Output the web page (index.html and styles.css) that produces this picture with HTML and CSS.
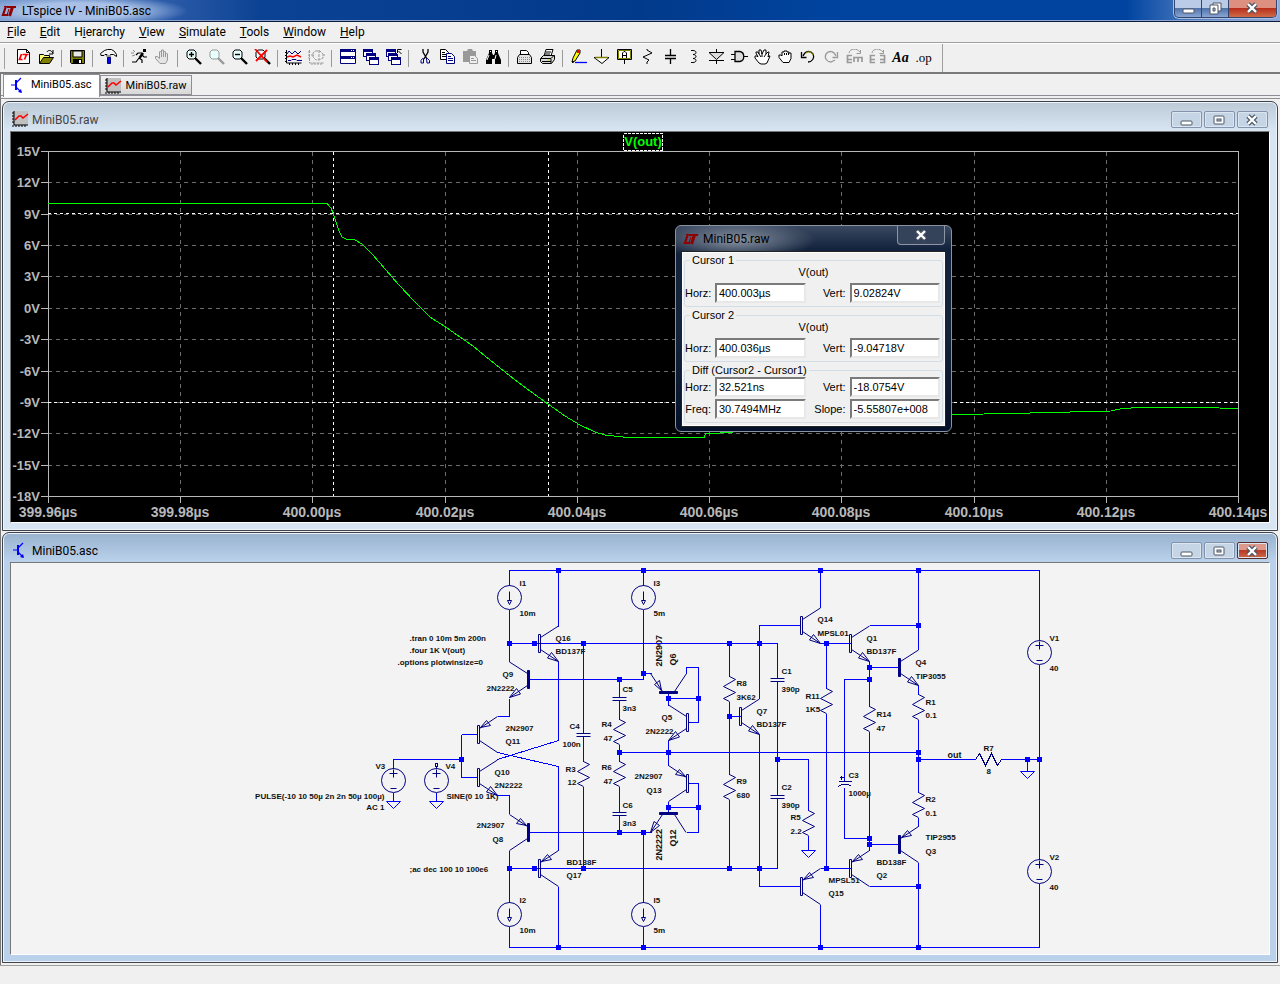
FILE: index.html
```html
<!DOCTYPE html>
<html lang="en">
<head>
<meta charset="utf-8">
<title>LTspice IV - MiniB05.asc</title>
<link rel="stylesheet" href="styles.css">
</head>
<body>
<svg class="defs" aria-hidden="true">
  <defs>
    <g id="lt" fill="none" stroke="#900000"><path d="M6 2L3 11H8" stroke-width="2.200"/><path d="M7 3H16" stroke-width="2"/><path d="M12.500 3L9.500 12" stroke-width="3"/><path d="M4 2.500H8M7 11l2-6" stroke-width="1"/></g>
    <g id="i-raw"><rect x="1" width="15" height="14" fill="#c0c0c0"/><path d="M2 0v14h14M0 2h2M0 5h2M0 8h2M0 11h2M4 14v2M7 14v2M10 14v2M13 14v2M0 15h2" stroke="#000" fill="none"/><path d="M3 9l4-4h2l2 2 5-4" stroke="#f00" stroke-width="1.6" fill="none"/></g>
    <g id="i-asc"><path d="M0 7h5M10 0L5 5M5 9l5 5" stroke="#00f" stroke-width="1.200" fill="none"/><path d="M5 2v10" stroke="#00f" stroke-width="2"/><path d="M11 15l-4-1 3-3z" fill="#00f"/></g>
    <g id="w-min"><rect x="1" y="7" width="11" height="4" rx="1" fill="#fff" stroke="#4d5666"/></g>
    <g id="w-max"><rect x="1" y="2" width="10" height="8" rx="1" fill="#fff" stroke="#4d5666"/><rect x="4" y="5" width="4" height="2" fill="#b5c6dc" stroke="#4d5666"/></g>
    <g id="w-close"><path d="M2 2l8 8M10 2l-8 8" stroke="#4d5666" stroke-width="4.6"/><path d="M2 2l8 8M10 2l-8 8" stroke="#fff" stroke-width="2.4"/></g>
    <g id="lens"><path class="glass" d="M3 1h5l2 2v5l-2 2H3L1 8V3z" stroke="currentColor"/><path d="M9 9l6 6" stroke="currentColor" stroke-width="2.4"/></g>
    <g id="win"><rect x="0" y="0" width="9" height="7" fill="#fff" stroke="#000080"/><path d="M0 1h9" stroke="#000080" stroke-width="3"/></g>
    <g id="npn"><path class="bar" d="M-1-9h2V9h-2z"/><path d="M1-6l18-11.500M1 6l18 12"/><path class="hollow" d="M19 18L8 14.500 12 9z"/></g>
    <g id="pnp"><path class="bar" d="M-1-9h2V9h-2z"/><path d="M1 6l18 12M1-6l18-12"/><path class="hollow" d="M2-7L8-14 12-9z"/></g>
    <g id="res"><path d="M0 0l6 3-12 7 12 6-12 6 6 3"/></g>
    <g id="cap"><path d="M-7 0H7M-7 3H7"/></g>
    <g id="gnd"><path d="M-7 0H7L0 7z"/></g>
    <g id="isrc"><circle r="12"/><path d="M0-6V3M-2 3H2L0 7z"/></g>
    <g id="vsrc"><circle r="12"/><path d="M-4-7H4M0-11V-3M-3 8H3"/></g>
    <path id="dot" d="M-3-3H2V2H-3z"/>
  </defs>
</svg>

<header class="titlebar">
  <svg class="logo" viewBox="0 0 16 14"><use href="#lt"/></svg>
  <h1>LTspice IV - MiniB05.asc</h1>
  <div class="sysbuttons">
    <button aria-label="Minimize"><svg viewBox="0 0 13 13"><use href="#w-min"/></svg></button>
    <button aria-label="Restore"><svg viewBox="0 0 13 13"><path d="M4 1h8v8H4z" fill="#fff" stroke="#4d5666"/><path d="M1 3h8v9H1z" fill="#fff" stroke="#4d5666"/><path d="M4 6h2v3H4z" fill="#b5c6dc" stroke="#4d5666"/></svg></button>
    <button class="close" aria-label="Close"><svg viewBox="0 0 13 13"><use href="#w-close"/></svg></button>
  </div>
</header>

<nav class="menu">
  <button><u>F</u>ile</button><button><u>E</u>dit</button><button>H<u>i</u>erarchy</button><button><u>V</u>iew</button><button><u>S</u>imulate</button><button><u>T</u>ools</button><button><u>W</u>indow</button><button><u>H</u>elp</button>
</nav>

<div class="toolbar" role="toolbar">
  <button aria-label="New schematic"><svg viewBox="0 0 17 16"><path d="M2.500.500h9l3 3v11h-12z" fill="#fff" stroke="#000"/><path d="M11.500.500v3h3" fill="none" stroke="#000"/><path d="M6.500 5L4.500 10.500h3M7.500 5.500h6M11.500 5.500l-2 5" fill="none" stroke="#f00" stroke-width="1.700"/></svg></button>
  <button aria-label="Open"><svg viewBox="0 0 17 16"><path d="M1.500 14V5.500h4l1 1h5V9" fill="#ffff70" stroke="#000"/><path d="M1.500 14.500l4-6h10l-4 6z" fill="#808000" stroke="#000"/><path d="M9 3c1-2 4-2 5 0l1 1M15 1v4h-4" fill="none" stroke="#000"/></svg></button>
  <i></i>
  <button aria-label="Save"><svg viewBox="0 0 17 16"><path d="M1.500 1.500h14v13h-13l-1-1z" fill="#808000" stroke="#000"/><path d="M4 2h9v6H4z" fill="#e8e8e8" stroke="#000"/><path d="M4 10h9v5H4z" fill="#000"/><path d="M10 11h2v3h-2z" fill="#fff"/></svg></button>
  <i></i>
  <button aria-label="Control panel"><svg viewBox="0 0 17 16"><path d="M.500 4.500l4-3 3-1h4l3 2 2 3v2l-3-2h-3v2H7V5.500H5l-1 1H1z" fill="#f4f4f4" stroke="#000"/><path d="M7 6h4v3H7z" fill="#999"/><path d="M7.500 8.500h3v6h-3z" fill="#00f" stroke="#000080"/></svg></button>
  <i></i>
  <button aria-label="Run"><svg viewBox="0 0 17 16"><path d="M12 0h3v3h-3z" fill="#000"/><path d="M12 4L8.500 9" stroke="#000" stroke-width="2.400"/><path d="M8 9l3 2v3M8 9l-3 4H1M11 4H7L5 6M11 6l2 2h3" fill="none" stroke="#000" stroke-width="1.200"/><path d="M2 1l2 2M0 4h3M1 7l3-1" stroke="#888"/></svg></button>
  <button aria-label="Halt" disabled><svg viewBox="0 0 17 16"><path d="M6 14.500L1.500 9.500V7.500h2l2 2V3l1-1 1 1V1h2v2l1-1 1 1v2l1-1 1 1v6l-2 3.500z" fill="#e4e4e4" stroke="#999"/><path d="M7.500 3v5M9.500 3v5M11.500 4v4" stroke="#999"/></svg></button>
  <i></i>
  <button aria-label="Zoom in"><svg viewBox="0 0 17 16"><use href="#lens" x="1"/><path d="M4 5.500h5M6.500 3v5" stroke="#000" stroke-width="1.400"/></svg></button>
  <button aria-label="Pan" disabled><svg class="grey" viewBox="0 0 17 16"><use href="#lens" x="1"/></svg></button>
  <button aria-label="Zoom out"><svg viewBox="0 0 17 16"><use href="#lens" x="1"/><path d="M4 5.500h5" stroke="#000" stroke-width="1.400"/></svg></button>
  <button aria-label="Zoom full extents"><svg viewBox="0 0 17 16"><use href="#lens" x="1"/><path d="M1 0l12 13M13 1L2 12" stroke="#f00" stroke-width="1.800"/></svg></button>
  <i></i>
  <button aria-label="Autorange"><svg viewBox="0 0 17 16"><path d="M1.500 1v13h15M0 3.500h2M0 6.500h2M0 9.500h2M0 12.500h2M4.500 14v2M7.500 14v2M10.500 14v2M13.500 14v2" fill="none" stroke="#000"/><path d="M2 5l2-3 3 3 3-3 3 3 3-3M3 11.500h3l1-1h4l1 1h5" fill="none" stroke="#000080"/><path d="M2 8l3-1 3 1 4-2 4 2" fill="none" stroke="#f00" stroke-width="1.500"/></svg></button>
  <button aria-label="Pick visible traces" disabled><svg viewBox="0 0 17 16"><path d="M1.500 1v13h15M0 3h2M0 6h2M0 9h2M4 14v2M7 14v2M10 14v2M13 14v2M7 2h5l3 3v4l-4 2H8L5 8V4zM11 1v10M3 6h3M15 6h2" fill="none" stroke="#999" stroke-dasharray="3 1"/></svg></button>
  <i></i>
  <button aria-label="Tile"><svg viewBox="0 0 17 16"><path d="M1.500.500h15v14h-15z" fill="#fff" stroke="#000080"/><path d="M1 1.500h16M1 8.500h16" stroke="#000080" stroke-width="3"/><path d="M12 1.500h1M14 1.500h1M12 8.500h1M14 8.500h1" stroke="#fff"/></svg></button>
  <button aria-label="Cascade"><svg viewBox="0 0 17 16"><use href="#win" x="1.500" y=".500"/><use href="#win" x="4.500" y="4.500"/><use href="#win" x="7.500" y="8.500"/></svg></button>
  <button aria-label="Close all"><svg viewBox="0 0 17 16"><use href="#win" x="1.500" y=".500"/><use href="#win" x="3.500" y="4.500"/><use href="#win" x="6.500" y="8.500"/><path d="M12 0h5v5h-5z" fill="#f0f0f0"/><path d="M16.500 5l-3-3M12.500 4V.500h4" fill="none" stroke="#000"/></svg></button>
  <i></i>
  <button aria-label="Cut"><svg viewBox="0 0 17 16"><path d="M7 0v3l4 7M12 0v3l-4 7" fill="none" stroke="#000" stroke-width="1.300"/><path d="M7.500 9.500h-1l-1.500 2v2.500h2.500zM10.500 9.500h1l2 2v2.500h-2.500z" fill="none" stroke="#000080"/></svg></button>
  <button aria-label="Copy"><svg viewBox="0 0 17 16"><path d="M1.500.500h5l3 3v7h-8z" fill="#fff" stroke="#000"/><path d="M3 3.500h3M3 5.500h5M3 7.500h5" stroke="#000"/><path d="M7.500 4.500h5l3 3v7h-8z" fill="#fff" stroke="#000080"/><path d="M9 7.500h3M9 9.500h5M9 11.500h5" stroke="#000080"/></svg></button>
  <button aria-label="Paste" disabled><svg viewBox="0 0 17 16"><path d="M1 2h4l1-2h4l1 2h3v11H1z" fill="#999"/><path d="M7.500 6.500h5l3 3v5h-8z" fill="#eee" stroke="#999"/><path d="M9 9.500h3M9 11.500h5" stroke="#999"/></svg></button>
  <button aria-label="Find"><svg viewBox="0 0 17 16"><path d="M4 1h3v3l1 2h1l1-2V1h3v3l3 7v4h-6v-5H7v5H1v-4l3-7z" fill="#000"/><path d="M4 6l-2 5M11 6l-1 4M5.500 2v1M11.500 2v1" stroke="#fff"/></svg></button>
  <i></i>
  <button aria-label="Print setup"><svg viewBox="0 0 17 16"><path d="M4.500 6V1.500h6l2 2V6" fill="#fff" stroke="#000"/><path d="M1.500 14.500v-6l2-3h10l2 3v6z" fill="#e4e4e4" stroke="#000"/><path d="M3 8.500h11M3 10.500h11M3 12.500h11" stroke="#888" stroke-dasharray="1 1"/></svg></button>
  <button aria-label="Print"><svg viewBox="0 0 17 16"><path d="M5 7l2-6.500h7L12 7" fill="#fff" stroke="#000"/><path d="M7 3h5M6 5h5" stroke="#000"/><path d="M1.500 9.500l3-3h11v4l-3 4h-9l-2-2z" fill="#d8d8d8" stroke="#000"/><path d="M2 9.500h10l3-3M12 10v4M3 12.500h9" fill="none" stroke="#000"/><path d="M8 11h3" stroke="#dd0"/></svg></button>
  <i></i>
  <button aria-label="Wire"><svg viewBox="0 0 17 16"><path d="M2 13l1-4 4-8h3v3l-5 8z" fill="#ff0" stroke="#000"/><path d="M7 1h3v3H7z" fill="#f00"/><path d="M2 11v3h2z" fill="#000"/><path d="M5 13.500h12" stroke="#00f" stroke-width="1.300"/></svg></button>
  <button aria-label="Ground"><svg viewBox="0 0 17 16"><path d="M8.500 0v8M1 8.500h15l-7 6z" fill="#fff" stroke="#000"/><path d="M2 8.500h13" stroke="#808000" stroke-width="1.500"/></svg></button>
  <button aria-label="Label net"><svg viewBox="0 0 17 16"><path d="M1.500.500h14v10h-14z" fill="#fff" stroke="#000"/><path d="M2.500 1.500h12v8h-12z" fill="none" stroke="#808000"/><path d="M6.500 9V4l1.500-1.500h1L10.500 4v5M6 6.500h5M8.500 11v4" fill="none" stroke="#000"/></svg></button>
  <button aria-label="Resistor"><svg viewBox="0 0 17 16"><path d="M8 0v1l5 3-9 4 6 3-2 2v2" fill="none" stroke="#000"/></svg></button>
  <button aria-label="Capacitor"><svg viewBox="0 0 17 16"><path d="M8.500 0v6M3 6.500h11M3 9.500h11M8.500 10v5" stroke="#000" stroke-width="1.300"/></svg></button>
  <button aria-label="Inductor"><svg viewBox="0 0 17 16"><path d="M6 1.500h2c4 0 4 4 0 4 4 0 4 4 0 4 4 0 4 4 0 4H6" fill="none" stroke="#000"/></svg></button>
  <button aria-label="Diode"><svg viewBox="0 0 17 16"><path d="M8.500 0v3M1 3.500h15l-7.500 7zM1 11.500h15M8.500 11v4" fill="#ddd" stroke="#000"/></svg></button>
  <button aria-label="Component"><svg viewBox="0 0 17 16"><path d="M4 2.500h5c5 1 5 9 0 10H4z" fill="#ddd" stroke="#000" stroke-width="1.300"/><path d="M0 5.500h4M0 10.500h4M13 7.500h4" stroke="#000"/></svg></button>
  <button aria-label="Move"><svg viewBox="0 0 17 16"><path d="M5 14L1 9V7h2l1 1-2-4V3h2l1 2V1h2l1 4 2-4h2v4l2-2h1l-1 5 1-1h1l-3 7-2 1H7z" fill="#fff" stroke="#000"/><path d="M5 5l2 3M8 4v4M12 5l-2 3" stroke="#000"/></svg></button>
  <button aria-label="Drag"><svg viewBox="0 0 17 16"><path d="M6 13.500l-4-5V6h2l1 1V3h2V2h3v1h2v1h2v5.500l-2 4z" fill="#fff" stroke="#000"/><path d="M7.500 4v2M9.500 4v2M11.500 4v2" stroke="#000"/></svg></button>
  <button aria-label="Undo"><svg viewBox="0 0 17 16"><path d="M3 7c2-5 7-6 10-2 2 4-1 8-5 8" fill="none" stroke="#000" stroke-width="1.300"/><path d="M5 5c3-3 6-3 8 1" fill="none" stroke="#aa0"/><path d="M1.500 3v5.500h5" fill="none" stroke="#000" stroke-width="1.300"/></svg></button>
  <button aria-label="Redo" disabled><svg viewBox="0 0 17 16"><path d="M13 7C11 2 6 1 3 5c-2 4 1 8 5 8l4-2" fill="none" stroke="#999" stroke-width="1.300"/><path d="M14.500 3v5.500h-5" fill="none" stroke="#999" stroke-width="1.300"/></svg></button>
  <button aria-label="Rotate" disabled><svg viewBox="0 0 17 16"><path d="M3 4c1-5 8-5 11-1M14.500 1v3.500h-4" fill="none" stroke="#999"/><path d="M6 6.500H1.500v7H6M2 10.500h4M8 13V8.500h8V13M12 9v4" fill="none" stroke="#999" stroke-width="1.700"/></svg></button>
  <button aria-label="Mirror" disabled><svg viewBox="0 0 17 16"><path d="M3 4c1-5 8-5 11-1M14.500 1v3.500h-4" fill="none" stroke="#999"/><path d="M6 6.500H1.500v7H6M2 10.500h4M11 6.500h4.500v7H11M15 10.500h-4" fill="none" stroke="#999" stroke-width="1.700"/></svg></button>
  <button class="aa" aria-label="Text">Aa</button>
  <button class="op" aria-label="SPICE directive">.op</button>
</div>

<div class="tabs" role="tablist">
  <button class="tab on" role="tab"><svg viewBox="-1 -1 17 17"><use href="#i-asc"/></svg>MiniB05.asc</button>
  <button class="tab" role="tab"><svg viewBox="0 0 17 17"><use href="#i-raw"/></svg>MiniB05.raw</button>
</div>

<main class="mdi">
  <section class="child">
    <header>
      <svg viewBox="0 0 17 17"><use href="#i-raw"/></svg><h2>MiniB05.raw</h2>
      <button aria-label="Minimize"><svg viewBox="0 0 13 13"><use href="#w-min"/></svg></button>
      <button aria-label="Maximize"><svg viewBox="0 0 13 13"><use href="#w-max"/></svg></button>
      <button aria-label="Close"><svg viewBox="0 0 13 13"><use href="#w-close"/></svg></button>
    </header>
    <div class="client">
      <svg class="plot" viewBox="11 132 1258 390">
        <path class="grid" d="M180.500 152V496M312.500 152V496M445.500 152V496M577.500 152V496M709.500 152V496M841.500 152V496M974.500 152V496M1106.500 152V496M48 182.500H1238M48 214.500H1238M48 245.500H1238M48 276.500H1238M48 308.500H1238M48 339.500H1238M48 371.500H1238M48 402.500H1238M48 433.500H1238M48 465.500H1238"/>
        <path class="axis" d="M41 151.500H1238.500V503M48.500 151V503M41 496.500H1238M41 182.500h7M41 214.500h7M41 245.500h7M41 276.500h7M41 308.500h7M41 339.500h7M41 371.500h7M41 402.500h7M41 433.500h7M41 465.500h7M180.500 496v7M312.500 496v7M445.500 496v7M577.500 496v7M709.500 496v7M841.500 496v7M974.500 496v7M1106.500 496v7"/>
        <path class="cursor" d="M333.500 152V496M548.500 152V496M48 213.500H1238M48 402.500H1238"/>
        <path class="trace" d="M48 203.500H327L331 208 333 213 336 222 339 231 342 237 346 239 355 240 362 244 372 254 386 270 398 284 415 302 430 317 447 328 473 346 485 356 510 376 530 391 548 404 565 416 580 425 595 432 605 435 628 437.500H704L706 433H720L940 416 958 414.500 1010 413.500 1050 412.500 1111 411 1122 408.500 1140 407.500H1200L1238 408.500"/>
        <path class="box" d="M623.500 133.500H662.500V150.500H623.500z"/>
        <text class="name" x="643" y="146">V(out)</text>
        <g class="ylab"><text x="40" y="156">15V</text><text x="40" y="187">12V</text><text x="40" y="219">9V</text><text x="40" y="250">6V</text><text x="40" y="281">3V</text><text x="40" y="313">0V</text><text x="40" y="344">-3V</text><text x="40" y="376">-6V</text><text x="40" y="407">-9V</text><text x="40" y="438">-12V</text><text x="40" y="470">-15V</text><text x="40" y="501">-18V</text></g>
        <g class="xlab"><text x="48" y="517">399.96µs</text><text x="180" y="517">399.98µs</text><text x="312" y="517">400.00µs</text><text x="445" y="517">400.02µs</text><text x="577" y="517">400.04µs</text><text x="709" y="517">400.06µs</text><text x="841" y="517">400.08µs</text><text x="974" y="517">400.10µs</text><text x="1106" y="517">400.12µs</text><text x="1238" y="517">400.14µs</text></g>
      </svg>
      <div class="dialog" role="dialog" aria-label="MiniB05.raw">
        <header><svg viewBox="0 0 16 14"><use href="#lt"/></svg><h3>MiniB05.raw</h3><button aria-label="Close"><svg viewBox="0 0 13 13"><use href="#w-close"/></svg></button></header>
        <form class="body">
          <fieldset><legend>Cursor 1</legend><p>V(out)</p>
            <div class="fields"><label for="h1">Horz:</label><input id="h1" value="400.003µs"><label for="v1">Vert:</label><input id="v1" value="9.02824V"></div></fieldset>
          <fieldset><legend>Cursor 2</legend><p>V(out)</p>
            <div class="fields"><label for="h2">Horz:</label><input id="h2" value="400.036µs"><label for="v2">Vert:</label><input id="v2" value="-9.04718V"></div></fieldset>
          <fieldset><legend>Diff (Cursor2 - Cursor1)</legend>
            <div class="fields"><label for="h3">Horz:</label><input id="h3" value="32.521ns"><label for="v3">Vert:</label><input id="v3" value="-18.0754V"><label for="f3">Freq:</label><input id="f3" value="30.7494MHz"><label for="s3">Slope:</label><input id="s3" value="-5.55807e+008"></div></fieldset>
        </form>
      </div>
    </div>
  </section>

  <section class="child active">
    <header>
      <svg viewBox="-1 -1 17 17"><use href="#i-asc"/></svg><h2>MiniB05.asc</h2>
      <button aria-label="Minimize"><svg viewBox="0 0 13 13"><use href="#w-min"/></svg></button>
      <button aria-label="Maximize"><svg viewBox="0 0 13 13"><use href="#w-max"/></svg></button>
      <button class="close" aria-label="Close"><svg viewBox="0 0 13 13"><use href="#w-close"/></svg></button>
    </header>
    <div class="client">
      <svg class="schematic" viewBox="11 563 1258 391">
        <g transform="translate(.5 .5)">
        <g class="labels">
          <text x="519" y="585">I1</text><text x="519" y="615">10m</text><text x="555" y="640">Q16</text><text x="555" y="653">BD137F</text>
          <text x="409" y="640">.tran 0 10m 5m 200n</text><text x="409" y="652">.four 1K V(out)</text><text x="397" y="664">.options plotwinsize=0</text>
          <text x="502" y="676">Q9</text><text x="486" y="690">2N2222</text><text x="505" y="730">2N2907</text><text x="505" y="743">Q11</text>
          <text x="569" y="728">C4</text><text x="562" y="746">100n</text><text x="494" y="774">Q10</text><text x="494" y="787">2N2222</text>
          <text x="565" y="771">R3</text><text x="567" y="784">12</text><text x="601" y="726">R4</text><text x="603" y="740">47</text><text x="601" y="769">R6</text><text x="603" y="783">47</text>
          <text x="622" y="691">C5</text><text x="622" y="710">3n3</text><text x="622" y="807">C6</text><text x="622" y="825">3n3</text>
          <text x="653" y="585">I3</text><text x="653" y="615">5m</text><text x="661" y="719">Q5</text><text x="645" y="733">2N2222</text><text x="634" y="778">2N2907</text><text x="646" y="792">Q13</text>
          <text x="736" y="685">R8</text><text x="736" y="699">3K62</text><text x="736" y="783">R9</text><text x="736" y="797">680</text>
          <text x="756" y="713">Q7</text><text x="756" y="726">BD137F</text><text x="781" y="673">C1</text><text x="781" y="691">390p</text><text x="781" y="789">C2</text><text x="781" y="807">390p</text>
          <text x="790" y="819">R5</text><text x="790" y="833">2.2</text><text x="817" y="621">Q14</text><text x="817" y="635">MPSL01</text><text x="805" y="698">R11</text><text x="805" y="711">1K5</text>
          <text x="866" y="640">Q1</text><text x="866" y="653">BD137F</text><text x="915" y="664">Q4</text><text x="915" y="678">TIP3055</text><text x="925" y="704">R1</text><text x="925" y="717">0.1</text>
          <text x="876" y="716">R14</text><text x="876" y="730">47</text><text class="net" x="947" y="757">out</text><text x="983" y="750">R7</text><text x="986" y="773">8</text>
          <text x="1049" y="640">V1</text><text x="1049" y="670">40</text><text x="1049" y="859">V2</text><text x="1049" y="889">40</text>
          <text x="848" y="777">C3</text><text x="848" y="795">1000µ</text><text x="925" y="801">R2</text><text x="925" y="815">0.1</text><text x="925" y="839">TIP2955</text><text x="925" y="853">Q3</text>
          <text x="876" y="864">BD138F</text><text x="876" y="877">Q2</text><text x="828" y="882">MPSL51</text><text x="828" y="895">Q15</text><text x="566" y="864">BD138F</text><text x="566" y="877">Q17</text>
          <text x="519" y="902">I2</text><text x="519" y="932">10m</text><text x="653" y="902">I5</text><text x="653" y="932">5m</text><text x="476" y="827">2N2907</text><text x="492" y="841">Q8</text>
          <text x="409" y="871">;ac dec 100 10 100e6</text><text x="375" y="768">V3</text><text x="445" y="768">V4</text>
          <text class="end" x="384" y="798">PULSE(-10 10 50µ 2n 2n 50µ 100µ)</text><text class="end" x="384" y="809">AC 1</text><text x="446" y="798">SINE(0 10 1K)</text>
          <text class="net" transform="translate(661 666) rotate(-90)">2N2907</text><text class="net" transform="translate(675 665) rotate(-90)">Q6</text>
          <text class="net" transform="translate(661 860) rotate(-90)">2N2222</text><text class="net" transform="translate(675 846) rotate(-90)">Q12</text>
        </g>
        <path class="wire" d="M509 585V570H1039V640M509 609V661M509 643H777V678M509 698V716H497M558 570V626M558 661V740L497 759M528 679H643M643 570V585M643 609V679M643 673H651M461 734V777M461 734H477M461 777H477M393 768V759H461M497 752L558 766V850M497 795H509V813M509 850V902M509 868H777V798M528 832H651M558 886V947M509 926V947H1039V883M583 643V733M583 736V761M583 786V868M619 679V697M619 700V719M619 744V761M619 786V812M619 815V832M619 752H918M686 673V667H698V722H688M668 693V705M668 698H698M668 740V765M688 783H698V832H686M668 801V812M668 807H698M643 832V902M643 926V947M729 643V676M729 701V774M729 799V868M729 716H740M759 698V625H800M759 734V886H800M777 681V795M777 759H808V810M808 835V850M820 570V607M820 643H850M826 643V688M826 713V868M869 625H918M869 661V706M869 731V850M844 781V679H869M844 787V838H869M869 667H898M869 844H898M918 570V649M918 685V694M918 719V792M918 817V826M918 862V947M869 886H918M820 868H850M820 904V947M918 759H975M1001 759H1039M1027 759V771M1039 664V859M393 792V801M436 792V801"/>
        <g class="part">
          <use href="#isrc" x="509" y="597"/><use href="#isrc" x="643" y="597"/><use href="#isrc" x="509" y="914"/><use href="#isrc" x="643" y="914"/>
          <use href="#vsrc" x="393" y="780"/><use href="#vsrc" x="436" y="780"/><use href="#vsrc" x="1039" y="652"/><use href="#vsrc" x="1039" y="871"/>
          <path d="M436 768v-2M435 763h2v3h-2z"/>
          <use href="#npn" x="539" y="643"/><use href="#pnp" x="539" y="868"/><use href="#pnp" x="478" y="734"/><use href="#npn" x="478" y="777"/>
          <use href="#npn" x="740" y="716"/><use href="#npn" x="801" y="625"/><use href="#npn" x="850" y="643"/><use href="#pnp" x="850" y="868"/><use href="#pnp" x="801" y="886"/>
          <use href="#npn" transform="translate(687 722) scale(-1 1)"/><use href="#pnp" transform="translate(687 783) scale(-1 1)"/>
          <g class="solid"><use href="#npn" x="899" y="667"/><use href="#pnp" x="899" y="844"/><use href="#npn" transform="translate(528 679) scale(-1 1)"/><use href="#pnp" transform="translate(528 832) scale(-1 1)"/><use href="#pnp" transform="translate(668 692) rotate(-90)"/><use href="#npn" transform="translate(668 813) rotate(90)"/></g>
          <use href="#res" x="583" y="761"/><use href="#res" x="619" y="719"/><use href="#res" x="619" y="761"/><use href="#res" x="729" y="676"/><use href="#res" x="729" y="774"/><use href="#res" x="808" y="810"/><use href="#res" x="826" y="688"/><use href="#res" x="869" y="706"/><use href="#res" x="918" y="694"/><use href="#res" x="918" y="792"/>
          <path d="M975 759l4-6 6 12 6-12 6 12 4-6"/>
          <use href="#cap" x="583" y="733"/><use href="#cap" x="619" y="697"/><use href="#cap" x="619" y="812"/><use href="#cap" x="777" y="678"/><use href="#cap" x="777" y="795"/>
          <path d="M838 781H851M838 786l3-2h7l3 2M839 777h4M841 775v4"/>
        </g>
        <g class="wire"><use href="#gnd" x="393" y="801"/><use href="#gnd" x="436" y="801"/><use href="#gnd" x="808" y="850"/><use href="#gnd" x="1027" y="771"/></g>
        <g class="dots"><use href="#dot" x="558" y="570"/><use href="#dot" x="643" y="570"/><use href="#dot" x="820" y="570"/><use href="#dot" x="918" y="570"/><use href="#dot" x="509" y="643"/><use href="#dot" x="534" y="643"/><use href="#dot" x="583" y="643"/><use href="#dot" x="729" y="643"/><use href="#dot" x="759" y="643"/><use href="#dot" x="826" y="643"/><use href="#dot" x="643" y="673"/><use href="#dot" x="619" y="679"/><use href="#dot" x="668" y="698"/><use href="#dot" x="698" y="698"/><use href="#dot" x="729" y="716"/><use href="#dot" x="461" y="759"/><use href="#dot" x="619" y="752"/><use href="#dot" x="668" y="752"/><use href="#dot" x="918" y="752"/><use href="#dot" x="918" y="759"/><use href="#dot" x="777" y="759"/><use href="#dot" x="1027" y="759"/><use href="#dot" x="1039" y="759"/><use href="#dot" x="918" y="625"/><use href="#dot" x="869" y="667"/><use href="#dot" x="869" y="679"/><use href="#dot" x="668" y="807"/><use href="#dot" x="698" y="807"/><use href="#dot" x="619" y="832"/><use href="#dot" x="643" y="832"/><use href="#dot" x="869" y="838"/><use href="#dot" x="869" y="844"/><use href="#dot" x="509" y="868"/><use href="#dot" x="534" y="868"/><use href="#dot" x="583" y="868"/><use href="#dot" x="729" y="868"/><use href="#dot" x="759" y="868"/><use href="#dot" x="826" y="868"/><use href="#dot" x="918" y="886"/><use href="#dot" x="558" y="947"/><use href="#dot" x="643" y="947"/><use href="#dot" x="820" y="947"/><use href="#dot" x="918" y="947"/></g>
        </g>
      </svg>
    </div>
  </section>
</main>
<footer class="status"></footer>
</body>
</html>
```
FILE: styles.css
```css
* { box-sizing: border-box; }
body {
  margin: 0;
  min-height: 100vh;
  display: flex;
  flex-direction: column;
  background: #f0f0f0;
  color: #000;
  font: 12px/16px Roboto, "Noto Sans", sans-serif;
}
h1, h2, h3, p { margin: 0; font: inherit; }
button { font: inherit; color: inherit; padding: 0; border: 0; background: none; }
.defs { position: absolute; width: 0; height: 0; }

.titlebar {
  display: flex;
  align-items: center;
  height: 22px;
  padding-right: 3px;
  border-bottom: 1px solid #0b1d3d;
  box-shadow: inset 0 -1px #8ba5d0;
  background:
    radial-gradient(ellipse 110px 16px at 78px 11px, #a9c1e6 50%, transparent),
    linear-gradient(90deg, #6f93cb 0, #2a5aa8 170px, #0c4293 260px, #023a8b 50%, #0044a0 66%, #0044a0 88%, #7396cf 96%, #8eaade 100%);
}
.logo { width: 16px; height: 14px; margin: 0 6px 0 0; }
.titlebar h1 { flex: 1; }
.sysbuttons {
  display: flex;
  align-self: flex-start;
  height: 18px;
  border: 1px solid #33456b;
  border-top: 0;
  border-radius: 0 0 5px 5px;
  overflow: hidden;
  box-shadow: 0 0 0 1px #a9bfe3;
}
.sysbuttons button {
  width: 27px;
  border-right: 1px solid #33456b;
  background: linear-gradient(#b9cbe6 45%, #5274ab 50%, #88a6d4);
}
.sysbuttons .close { width: 47px; border: 0; background: linear-gradient(#dd9080 45%, #b8301c 50%, #cf6a48); }
.sysbuttons svg { width: 13px; height: 13px; display: block; margin: 0 auto; }

.menu { display: flex; height: 21px; border-bottom: 1px solid #a0a0a0; }
.menu button { padding: 0 7px; }

.toolbar {
  display: flex;
  align-items: center;
  height: 31px;
  padding-left: 12px;
  border-top: 1px solid #fff;
  border-bottom: 2px solid #7a7a7a;
  background: linear-gradient(#a0a0a0, #a0a0a0) 4px 4px / 1px 21px no-repeat, linear-gradient(#a0a0a0, #a0a0a0) 942px 0 / 1px 100% no-repeat;
}
.toolbar button { flex: none; width: 23px; height: 22px; }
.toolbar svg { display: block; width: 17px; height: 16px; margin: 2px 3px 4px; color: #000; }
.glass { fill: #e8ffff; }
.toolbar svg.grey { color: #999; fill: none; }
.toolbar i { flex: none; width: 8px; height: 17px; background: linear-gradient(#999, #999) 3px 0 / 1px 100% no-repeat; }
.toolbar .aa { font: italic bold 14px "Liberation Serif", serif; }
.toolbar .op { font: 13px "Liberation Serif", serif; }

.tabs {
  display: flex;
  align-items: flex-end;
  height: 25px;
  padding: 1px 3px 1px 2px;
  border-left: 1px solid #777;
  border-bottom: 1px solid #8e8e96;
  background: linear-gradient(#8e8e96, #8e8e96) 0 21px / 100% 1px no-repeat;
}
.tab {
  display: flex;
  align-items: center;
  gap: 4px;
  height: 20px;
  margin-bottom: 2px;
  padding: 2px 4px 0;
  border: 1px solid #8e8e96;
  background: linear-gradient(#f2f2f2, #d8d8d8);
  font-size: 11px;
}
.tab.on { height: 23px; margin-bottom: 0; padding: 0 7px 2px 6px; border-bottom: 0; background: #fff; }
.tab svg { width: 17px; height: 17px; }

.mdi { flex: 1; padding: 2px 2px 2px 1px; border-left: 1px solid #777; background: #f0f0f0; }
.child {
  margin-bottom: 1px;
  padding: 0 7px 7px;
  border: 1px solid #3c424c;
  border-radius: 7px 7px 0 0;
  background: linear-gradient(#bccad8, #d7e4f2 28px);
  box-shadow: inset 0 0 0 1px #eef4fa;
}
.child.active { margin-bottom: 0; background: linear-gradient(#98b1ce, #b9d1ea 28px); }
.child > header { display: flex; align-items: center; height: 29px; padding: 6px 2px 0 2px; }
.child > header > svg { width: 17px; height: 17px; }
.child h2 { flex: 1; padding-left: 3px; color: #444; }
.child.active h2 { color: #000; }
.child > header button {
  width: 31px;
  height: 17px;
  margin-left: 2px;
  border: 1px solid #8493ad;
  border-radius: 2px;
  background: #c6d5e5;
  box-shadow: inset 0 0 0 1px #dce6f1;
}
.child > header button.close { background: linear-gradient(#dd9a8c 45%, #b83a28 50%, #cf6a48); border-color: #5d2a2a; }
.child > header button svg { display: block; width: 13px; height: 13px; margin: 1px auto 0; }
.client { position: relative; border: 1px solid; border-color: #777 #fff #fff #777; background: #000; }
.active .client { background: #f3f3f3; }
.plot, .schematic { display: block; width: 100%; height: auto; }

.plot path { fill: none; shape-rendering: crispEdges; }
.grid { stroke: #6e6e6e; stroke-dasharray: 4 4; }
.axis { stroke: #b8b8b8; }
.cursor { stroke: #fff; stroke-dasharray: 3 3; }
.plot .trace { stroke: #0f0; }
.box { stroke: #fff; stroke-dasharray: 3 1; }
.plot text { font: bold 13px "Liberation Sans", Arial, sans-serif; fill: #b8b8b8; }
.plot .name { fill: #0f0; text-anchor: middle; }
.ylab { text-anchor: end; }
.xlab { text-anchor: middle; }
.plot .xlab text { font-size: 14px; }

.schematic path, .schematic circle { shape-rendering: crispEdges; }
.wire { fill: none; stroke: #00f; }
.part { fill: none; stroke: #000080; }
.solid { fill: #000080; }
.hollow { fill: none; }
.dots { fill: #00f; }
#dot { shape-rendering: crispEdges; }
.labels { font: bold 8px "Liberation Sans", Arial, sans-serif; fill: #111; }
.labels .net { font-size: 9px; }
.labels .end { text-anchor: end; }

.dialog {
  position: absolute;
  left: 664px;
  top: 93px;
  width: 277px;
  padding: 0 6px 5px;
  border: 1px solid #8a93a2;
  border-radius: 6px;
  background: radial-gradient(ellipse 80px 20px at 60px 14px, #8791a0, transparent), linear-gradient(#3a4860, #12223c 24px, #14243c 50%, #04102a);
  font: 11px/13px "Liberation Sans", Arial, sans-serif;
}
.dialog header { display: flex; height: 26px; align-items: center; }
.dialog header > svg { width: 16px; height: 14px; }
.dialog h3 { flex: 1; padding-left: 5px; font: 12px/16px Roboto, sans-serif; }
.dialog header button { align-self: flex-start; width: 48px; height: 19px; border: 1px solid #8c96a8; border-top: 0; border-radius: 0 0 4px 4px; background: #34435a; }
.dialog header button svg { display: block; width: 13px; height: 13px; margin: 0 auto; }
.body { margin: 0; padding: 1px 1px 2px; border: 1px solid #fff; outline: 1px solid #222; background: #f0f0f0; }
fieldset { margin: 0 0 2px; padding: 0 0 3px; border: 1px solid #d3dde6; border-radius: 3px; min-width: 0; }
fieldset:last-child { margin: 0; }
legend { margin-left: 5px; padding: 0 2px; line-height: 13px; }
fieldset p { height: 16px; line-height: 11px; text-align: center; }
.fields { display: grid; grid-template-columns: 30px 1fr 44px 1fr; row-gap: 2px; align-items: center; padding-right: 2px; }
.fields label { padding-right: 4px; text-align: right; }
.fields input {
  width: 100%;
  min-width: 0;
  height: 20px;
  padding: 0 2px;
  border: 2px solid;
  border-color: #7a7a7a #e8e8e8 #e8e8e8 #7a7a7a;
  background: #fff;
  font: inherit;
}
.status { height: 19px; border-top: 1px solid #a0a0a0; background: #f0f0f0; }
```
